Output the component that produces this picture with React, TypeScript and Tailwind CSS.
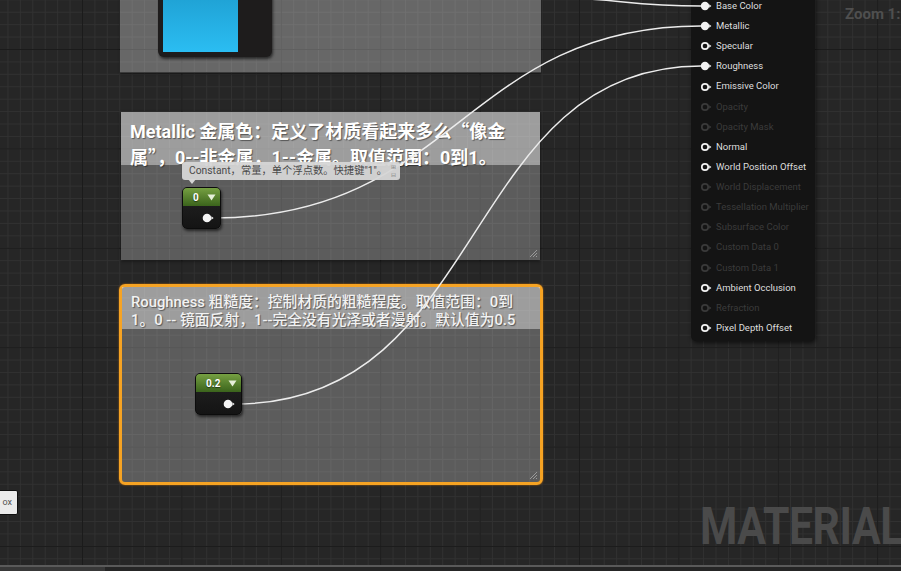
import React from 'react';

type PinState = 'on' | 'open' | 'off';

const outputs: { label: string; state: PinState }[] = [
  { label: 'Base Color', state: 'on' },
  { label: 'Metallic', state: 'on' },
  { label: 'Specular', state: 'open' },
  { label: 'Roughness', state: 'on' },
  { label: 'Emissive Color', state: 'open' },
  { label: 'Opacity', state: 'off' },
  { label: 'Opacity Mask', state: 'off' },
  { label: 'Normal', state: 'open' },
  { label: 'World Position Offset', state: 'open' },
  { label: 'World Displacement', state: 'off' },
  { label: 'Tessellation Multiplier', state: 'off' },
  { label: 'Subsurface Color', state: 'off' },
  { label: 'Custom Data 0', state: 'off' },
  { label: 'Custom Data 1', state: 'off' },
  { label: 'Ambient Occlusion', state: 'open' },
  { label: 'Refraction', state: 'off' },
  { label: 'Pixel Depth Offset', state: 'open' },
];

const PinIcon = ({ state }: { state: PinState }) => {
  const color = state === 'off' ? '#3a3a3a' : '#f2f2f2';
  return (
    <svg width="12" height="10" viewBox="0 0 12 10" className="shrink-0">
      {state === 'on' ? (
        <circle cx="5" cy="5" r="4.2" fill={color} />
      ) : (
        <circle cx="5" cy="5" r="3.2" fill="none" stroke={color} strokeWidth="1.7" />
      )}
      <path d="M9.2 3.2 L11.4 5 L9.2 6.8 Z" fill={color} />
    </svg>
  );
};

const OutPin = () => (
  <svg width="14" height="10" viewBox="0 0 14 10">
    <circle cx="5" cy="5" r="4.3" fill="#f4f4f4" />
    <path d="M9.4 3.2 L11.6 5 L9.4 6.8 Z" fill="#f4f4f4" />
  </svg>
);

const ConstantNode = ({ value, className }: { value: string; className: string }) => (
  <div
    className={`absolute flex flex-col rounded-[5px] border border-[#0c0c0c] bg-gradient-to-b from-[#242424] to-[#141414] shadow-[1px_2px_3px_rgba(0,0,0,0.6)] overflow-hidden ${className}`}
  >
    <div className="flex h-[18px] items-center justify-between bg-gradient-to-b from-[#76a042] to-[#3b641c] pl-[10px] pr-[4px] text-[10px] font-bold text-white">
      <span className="[text-shadow:0_1px_1px_rgba(0,0,0,0.5)]">{value}</span>
      <svg width="9" height="7" viewBox="0 0 9 7">
        <path d="M0.5 0.5 L8.5 0.5 L4.5 6.5 Z" fill="#e6efd9" />
      </svg>
    </div>
    <div className="flex flex-1 items-center justify-end pr-[4px] pt-[2px]">
      <OutPin />
    </div>
  </div>
);

const Grip = () => (
  <svg width="9" height="9" viewBox="0 0 9 9" className="absolute bottom-[2px] right-[2px]">
    <path d="M1 8 L8 1 M4 8 L8 4 M7 8 L8 7" stroke="#9a9a9a" strokeWidth="1" />
  </svg>
);

const Cjk = ({ children }: { children: React.ReactNode }) => (
  <span className="font-['Noto_Sans_CJK_SC',sans-serif]">{children}</span>
);

export default function App() {
  return (
    <div className="relative h-[571px] w-[901px] overflow-hidden bg-[#262626] font-['Roboto','Noto_Sans_CJK_SC',sans-serif] [background-image:linear-gradient(to_right,#1b1b1b_1px,transparent_1px),linear-gradient(to_bottom,#1b1b1b_1px,transparent_1px),linear-gradient(to_right,#313131_1px,transparent_1px),linear-gradient(to_bottom,#313131_1px,transparent_1px)] [background-size:99.4px_99.4px,99.4px_99.4px,12.425px_12.425px,12.425px_12.425px] [background-position:82px_49px,82px_49px,82px_49px,82px_49px]">
      {/* top comment with texture preview node */}
      <div className="absolute left-[120px] top-[-20px] h-[93px] w-[421px] border-b border-[#3a3a3a] bg-white/30 shadow-[0_1px_2px_rgba(0,0,0,0.5)]">
        <div className="absolute left-[38px] top-0 flex h-[77px] w-[114px] rounded-b-[6px] bg-[#1e1c1c] pb-[5px] pl-[5px] shadow-[1px_2px_3px_rgba(0,0,0,0.6)]">
          <div className="mt-auto h-[70px] w-[75px] bg-gradient-to-b from-[#1c9bcd] to-[#2bbdf2]" />
        </div>
      </div>

      {/* Metallic comment */}
      <div className="absolute left-[121px] top-[112px] flex h-[148px] w-[419px] flex-col bg-white/25 shadow-[0_1px_3px_rgba(0,0,0,0.6)]">
        <div className="h-[53px] whitespace-nowrap bg-white/40 pl-[9px] pt-[6px] text-[18px] font-bold leading-[24px] text-white [text-shadow:1px_1px_1px_rgba(0,0,0,0.45)]">
          Metallic 金属色：定义了材质看起来多么<Cjk>“</Cjk>像金
          <br />
          属<Cjk>”</Cjk>，0--非金属，1--金属。取值范围：0到1。
        </div>
        <Grip />
      </div>

      {/* Roughness comment (selected) */}
      <div className="absolute left-[119px] top-[284px] flex h-[201px] w-[424px] flex-col rounded-[6px] border-[3px] border-[#f6a323] bg-white/25 shadow-[0_0_2px_rgba(255,140,0,0.7)]">
        <div className="h-[42px] whitespace-nowrap bg-white/40 pl-[9px] pt-[6px] text-[14.8px] font-medium leading-[18px] text-[#f2f2f2] [text-shadow:1px_1px_1px_rgba(0,0,0,0.45)]">
          Roughness 粗糙度：控制材质的粗糙程度。取值范围：0到
          <br />
          1。0 -- 镜面反射，1--完全没有光泽或者漫射。默认值为0.5
        </div>
        <Grip />
      </div>

      {/* Material result node */}
      <div className="absolute left-[691px] top-[-14px] h-[355px] w-[124px] rounded-b-[5px] bg-[#141414] pt-[10px] shadow-[1px_2px_4px_rgba(0,0,0,0.6)]">
        {outputs.map((o) => (
          <div key={o.label} className="flex h-[20.125px] items-center gap-[4px] pl-[9px]">
            <PinIcon state={o.state} />
            <span
              className={`whitespace-nowrap text-[9.5px] ${
                o.state === 'off' ? 'text-[#3b3b3b]' : 'text-[#dedede]'
              }`}
            >
              {o.label}
            </span>
          </div>
        ))}
      </div>

      {/* wires */}
      <svg width="901" height="571" className="pointer-events-none absolute left-0 top-0">
        <g fill="none" stroke="#ececec" strokeWidth="1.5">
          <path d="M530 -3 C615 -3, 625 6, 701 6" />
          <path d="M213 218 C455 218, 465 26, 701 26" />
          <path d="M235 404 C490 404, 460 66, 701 66" />
        </g>
      </svg>

      <ConstantNode value="0" className="left-[182px] top-[187px] h-[42px] w-[39px]" />
      <ConstantNode value="0.2" className="left-[195px] top-[373px] h-[42px] w-[47px]" />

      {/* tooltip */}
      <div className="absolute left-[182px] top-[162px] flex h-[18px] w-[218px] items-center rounded-[3px] bg-[#d6d6d6]/95 pl-[7px] text-[10.3px] text-[#4a4a4a]">
        <span className="whitespace-nowrap">Constant，常量，单个浮点数。快捷键"1"。</span>
        <div className="absolute right-[4px] top-[1px] flex flex-col text-[6px] leading-[8px] text-[#8a8a8a]">
          <span>⊞</span>
          <span>⊟</span>
        </div>
        <div className="absolute left-[6px] top-[17px] h-0 w-0 border-l-[4px] border-r-[4px] border-t-[5px] border-l-transparent border-r-transparent border-t-[#d6d6d6]" />
      </div>

      {/* left clipped box */}
      <div className="absolute left-[-30px] top-[490px] flex h-[25px] w-[48px] items-center justify-end rounded-[2px] border border-[#101010] bg-[#ebebeb] pr-[5px] text-[9px] text-[#555]">
        ox
      </div>

      <div className="absolute left-[845px] top-[3px] whitespace-nowrap text-[15px] font-bold text-[#4f4f4f]">
        Zoom 1:1
      </div>

      <div className="absolute left-[700px] top-[497px] origin-left scale-x-[0.82] whitespace-nowrap text-[52px] font-bold leading-[60px] tracking-[-0.5px] text-[#4a4a4a]">
        MATERIAL
      </div>

      {/* bottom bar */}
      <div className="absolute bottom-0 left-0 flex h-[6px] w-full flex-col">
        <div className="h-[2px] bg-[#5a5a5a]" />
        <div className="flex flex-1">
          <div className="w-[105px] bg-[#383838]" />
          <div className="flex-1 bg-[#252525]" />
        </div>
      </div>
    </div>
  );
}
